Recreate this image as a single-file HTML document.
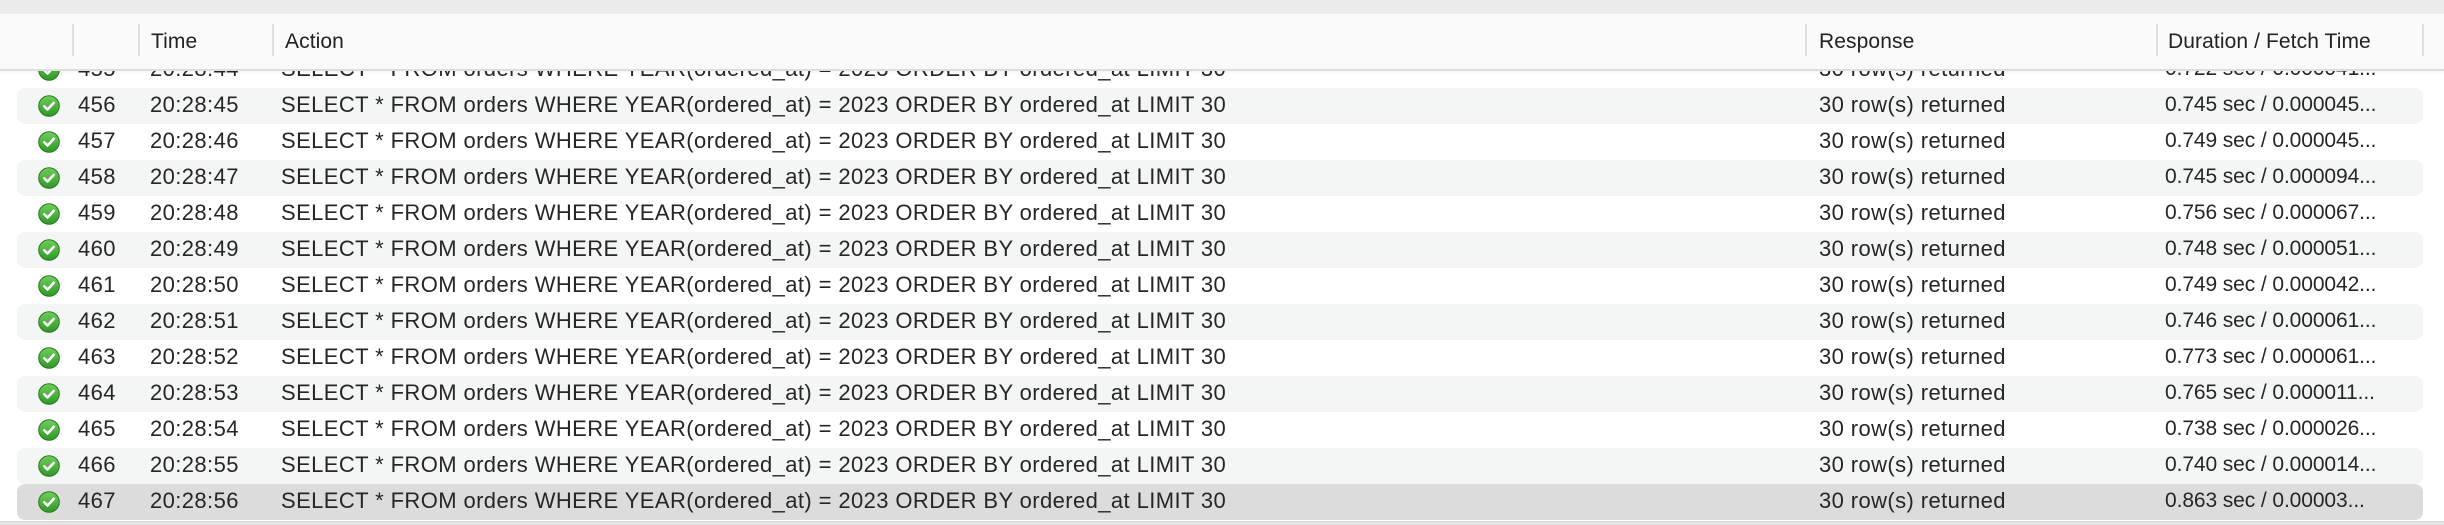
<!DOCTYPE html>
<html><head><meta charset="utf-8"><style>
body{margin:0;width:2444px;height:524px;overflow:hidden;background:#fff;font-family:"Liberation Sans",sans-serif;color:#262626;position:relative}
.top{position:absolute;left:0;top:0;width:2444px;height:14px;background:#ececec}
.hdr{position:absolute;left:0;top:14px;width:2444px;height:55px;background:#fafafa;border-bottom:2px solid #dedede;z-index:2;box-shadow:0 1px 2px rgba(0,0,0,.05)}
.sep{position:absolute;top:10px;width:2px;height:32px;background:#dedede}
.h{position:absolute;top:0;height:55px;line-height:56px;font-size:21px;color:#222;letter-spacing:0.1px}
.row{position:absolute;left:17px;width:2406px;height:36px;border-radius:8px}
.row.g{background:#f4f5f5}
.row.s{background:#dcdcdc}
.c{position:absolute;top:-1px;line-height:36px;font-size:22px;white-space:nowrap;letter-spacing:0.4px}
.c.d{font-size:21px;letter-spacing:-0.1px}
.ic{position:absolute;left:21px;top:7px;width:22px;height:22px}
.bot{position:absolute;left:0;top:521px;width:2444px;height:3px;background:#e4e4e4;border-top:1px solid #d6d6d6}
</style></head><body>
<div class="top"></div>
<div class="hdr">
<div class="sep" style="left:72px"></div>
<div class="sep" style="left:138px"></div>
<div class="sep" style="left:272px"></div>
<div class="sep" style="left:1805px"></div>
<div class="sep" style="left:2156px"></div>
<div class="sep" style="left:2422px"></div>
<div class="h" style="left:151px">Time</div>
<div class="h" style="left:285px">Action</div>
<div class="h" style="left:1819px">Response</div>
<div class="h" style="left:2168px">Duration / Fetch Time</div>
</div>
<svg width="0" height="0" style="position:absolute"><defs>
<linearGradient id="gg" x1="0" y1="0" x2="0" y2="1"><stop offset="0" stop-color="#6fcf5a"/><stop offset="1" stop-color="#2f9626"/></linearGradient>
</defs></svg>
<div id="rows"></div>
<script>
var d=[[455,"44","0.722 sec / 0.000041..."],[456,"45","0.745 sec / 0.000045..."],[457,"46","0.749 sec / 0.000045..."],[458,"47","0.745 sec / 0.000094..."],[459,"48","0.756 sec / 0.000067..."],[460,"49","0.748 sec / 0.000051..."],[461,"50","0.749 sec / 0.000042..."],[462,"51","0.746 sec / 0.000061..."],[463,"52","0.773 sec / 0.000061..."],[464,"53","0.765 sec / 0.000011..."],[465,"54","0.738 sec / 0.000026..."],[466,"55","0.740 sec / 0.000014..."],[467,"56","0.863 sec / 0.00003..."]];
var h="";
d.forEach(function(r,i){
var top=52+i*36;
var cls=(i==12)?"row s":(i%2==1?"row g":"row");
h+='<div class="'+cls+'" style="top:'+top+'px">'+
'<svg class="ic" viewBox="0 0 22 22"><circle cx="11" cy="11" r="10.3" fill="url(#gg)" stroke="#2c7a22" stroke-width="1"/><path d="M6.3 11.3l3.2 3.2 6.2-6.6" fill="none" stroke="#fff" stroke-width="2.6" stroke-linecap="round" stroke-linejoin="round"/></svg>'+
'<div class="c" style="left:61px">'+r[0]+'</div>'+
'<div class="c" style="left:133px">20:28:'+r[1]+'</div>'+
'<div class="c" style="left:264px">SELECT * FROM orders WHERE YEAR(ordered_at) = 2023 ORDER BY ordered_at LIMIT 30</div>'+
'<div class="c" style="left:1802px">30 row(s) returned</div>'+
'<div class="c d" style="left:2148px">'+r[2]+'</div></div>';
});
document.getElementById("rows").innerHTML=h;
</script>
<div class="bot"></div>
</body></html>
